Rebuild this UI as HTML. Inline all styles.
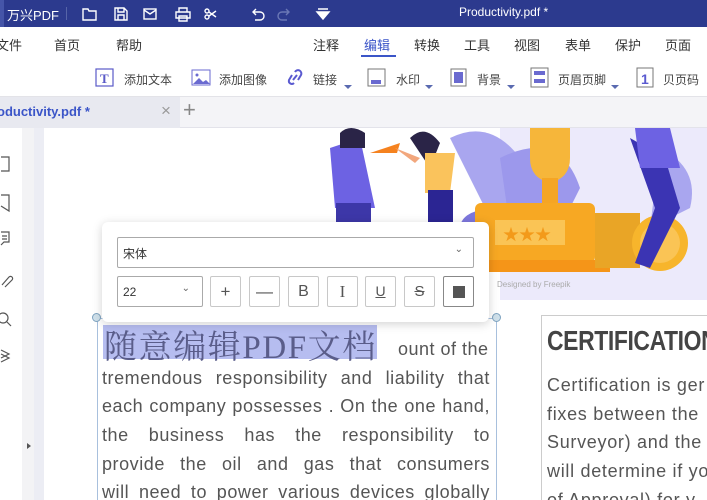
<!DOCTYPE html>
<html><head><meta charset="utf-8"><style>
*{margin:0;padding:0;box-sizing:border-box}
html,body{width:707px;height:500px;overflow:hidden}
body{background:#fff;font-family:"Liberation Sans","Noto Sans CJK SC",sans-serif;position:relative;color:#333}
.a{position:absolute}
.title{left:0;top:0;width:707px;height:27px;background:#2c3a8e;color:#fff}
.menu{top:27px;left:0;width:707px;height:33px;background:#fff;font-size:13px;color:#333}
.menu span{position:absolute;top:8px}
.tb{top:60px;left:0;width:707px;height:37px;background:#fff;border-bottom:1px solid #e3e3e8;font-size:12px;color:#444}
.tb span{position:absolute;top:11px}
.tabs{top:97px;left:0;width:707px;height:31px;background:#f4f4f7;border-bottom:1px solid #e3e3ea}
.btn{position:absolute;top:276px;width:31px;height:31px;border:1px solid #c8c8c8;border-radius:2px;background:#fff;font-size:17px;color:#555;text-align:center;line-height:29px}
.body p{position:absolute;left:102px;width:388px;font-size:18px;color:#555;white-space:nowrap;text-align:justify;text-align-last:justify;letter-spacing:0.55px}
</style></head><body>
<div class="a title">
 <div class="a" style="left:0;top:0;width:4px;height:27px;background:#4555a8"></div>
 <span class="a" style="left:7px;top:5px;font-size:13px">万兴PDF</span>
 <div class="a" style="left:66px;top:7px;width:1px;height:13px;background:#5664a8"></div>
 <svg class="a" style="left:78px;top:4px" width="260" height="20" fill="none" stroke="#fff" stroke-width="1.4">
  <path d="M5 5h5l1 2h7v9H5z"/>
  <path d="M37 4h9l3 3v9H37zM40 4v4h6V4M40 16v-5h6v5"/>
  <rect x="66" y="5" width="12" height="10"/><path d="M66 6l6 4 6-4"/>
  <path d="M98 8h14v6H98zM101 8V4h8v4M101 12h8v5h-8z"/>
  <circle cx="129" cy="7" r="2"/><circle cx="129" cy="13" r="2"/><path d="M131 8l7 5M131 12l7-5"/>
  <path d="M178 5l-3 3 3 3M175 8h7a4 4 0 010 8h-5"/>
  <path d="M208 5l3 3-3 3M211 8h-7a4 4 0 000 8h5" stroke="#6a77b5"/>
  <path d="M240 5h10M239 8h12l-6 7z" fill="#fff"/>
 </svg>
 <span class="a" style="left:459px;top:5px;font-size:12px">Productivity.pdf *</span>
</div>
<div class="a menu">
 <span style="left:-4px">文件</span><span style="left:54px">首页</span><span style="left:116px">帮助</span>
 <span style="left:313px">注释</span><span style="left:364px;color:#3b55c8">编辑</span>
 <div class="a" style="left:361px;top:28px;width:35px;height:2px;background:#3b55c8"></div>
 <span style="left:414px">转换</span><span style="left:464px">工具</span><span style="left:514px">视图</span><span style="left:565px">表单</span><span style="left:615px">保护</span><span style="left:665px">页面</span>
</div>
<div class="a tb">
 <svg class="a" style="left:95px;top:8px" width="20" height="20"><rect x="1" y="1" width="17" height="17" fill="none" stroke="#5a5ac8" stroke-width="1.2"/><text x="5" y="15" font-size="13" font-weight="bold" fill="#5a5ac8" font-family="Liberation Serif">T</text></svg>
 <span style="left:124px">添加文本</span>
 <svg class="a" style="left:191px;top:9px" width="20" height="18"><rect x="1" y="1" width="18" height="15" fill="none" stroke="#6a6ad0"/><path d="M2 15l6-6 4 4 3-2 4 4z" fill="#6a6ad0"/><circle cx="6" cy="6" r="1.5" fill="#6a6ad0"/></svg>
 <span style="left:219px">添加图像</span>
 <svg class="a" style="left:287px;top:8px" width="16" height="20" fill="none" stroke="#5a5ad0" stroke-width="2"><path d="M8 4a3 3 0 016 3l-3 5M7 15a3 3 0 01-5-3l3-5M6 12l4-5"/></svg>
 <span style="left:313px">链接</span>
 <svg class="a" style="left:367px;top:8px" width="20" height="20"><rect x="1" y="1" width="17" height="17" fill="none" stroke="#777"/><rect x="4" y="12" width="10" height="4" fill="#6a6ad0"/></svg>
 <span style="left:396px">水印</span>
 <svg class="a" style="left:450px;top:8px" width="20" height="20"><rect x="1" y="1" width="15" height="17" fill="none" stroke="#777"/><rect x="4" y="4" width="9" height="11" fill="#6a6ad0"/></svg>
 <span style="left:477px">背景</span>
 <svg class="a" style="left:530px;top:7px" width="20" height="22"><rect x="1" y="1" width="17" height="19" fill="none" stroke="#777"/><rect x="4" y="4" width="11" height="4" fill="#6a6ad0"/><rect x="4" y="12" width="11" height="4" fill="#6a6ad0"/></svg>
 <span style="left:558px">页眉页脚</span>
 <svg class="a" style="left:636px;top:7px" width="20" height="22"><rect x="1" y="1" width="16" height="19" fill="none" stroke="#777"/><text x="5" y="17" font-size="14" font-weight="bold" fill="#5a5ad0">1</text></svg>
 <span style="left:663px">贝页码</span>
 <div class="a" style="left:344px;top:25px;border:4px solid transparent;border-top:4px solid #5a6ab0"></div>
 <div class="a" style="left:425px;top:25px;border:4px solid transparent;border-top:4px solid #5a6ab0"></div>
 <div class="a" style="left:507px;top:25px;border:4px solid transparent;border-top:4px solid #5a6ab0"></div>
 <div class="a" style="left:611px;top:25px;border:4px solid transparent;border-top:4px solid #5a6ab0"></div>
</div>
<div class="a tabs">
 <div class="a" style="left:0;top:0;width:180px;height:31px;background:#e8e9f0"></div>
 <span class="a" style="left:-3px;top:7px;font-size:13px;font-weight:bold;color:#3b55c8">oductivity.pdf *</span>
 <span class="a" style="left:161px;top:4px;font-size:17px;color:#999">×</span>
 <span class="a" style="left:183px;top:0px;font-size:22px;color:#888">+</span>
</div>
<div class="a" style="left:22px;top:128px;width:12px;height:372px;background:#f3f3f5"></div>
<div class="a" style="left:34px;top:128px;width:10px;height:372px;background:#ecedf4"></div>
<svg class="a" style="left:0;top:150px" width="14" height="220" fill="none" stroke="#555" stroke-width="1.2">
 <path d="M1 7h8v14H1"/><path d="M1 45h8v16l-8-5"/><path d="M1 82h8v10H4l-3 3M2 86h5M2 89h5"/>
 <path d="M2 135l7-8a2 2 0 013 3l-7 7"/><circle cx="3" cy="168" r="5"/><path d="M7 172l4 4"/>
 <path d="M1 200l8 4-8 4M1 204l8 4-8 4"/>
</svg>
<div class="a" style="left:27px;top:443px;border:3px solid transparent;border-left:4px solid #555"></div>
<!-- illustration -->
<svg class="a" style="left:300px;top:128px" width="407" height="172">
 <rect x="170" y="0" width="237" height="172" fill="#eceafb"/>
 <rect x="0" y="0" width="200" height="172" fill="#fff"/>
 <path d="M150 10q40-20 70 20t10 80l-40-20z" fill="#a9a6ef"/>
 <path d="M200 30q60-30 80 30l-30 60-40-20z" fill="#9c98ec"/>
 <path d="M360 20q40 20 30 60l-40 20z" fill="#a9a6ef"/>
 <ellipse cx="185" cy="100" rx="25" ry="18" fill="#7d77dd"/>
 <path d="M230 0h40v30q0 20-20 25-20-5-20-25z" fill="#f6b63a"/>
 <rect x="242" y="50" width="16" height="40" fill="#f5a524"/>
 <rect x="175" y="75" width="120" height="60" rx="6" fill="#f7a823"/>
 <rect x="195" y="92" width="70" height="25" fill="#fac455"/>
 <text x="203" y="112" font-size="16" fill="#f39a1a">★★★</text>
 <rect x="170" y="132" width="140" height="12" fill="#f59518"/>
 <rect x="295" y="85" width="45" height="55" fill="#e9a526"/>
 <circle cx="360" cy="115" r="28" fill="#f7b52c"/><circle cx="360" cy="115" r="20" fill="#fac455"/>
 <path d="M330 10l35 20 15 50-30 60-15-5 20-55z" fill="#3b34b3"/>
 <path d="M335 0h35l10 40h-40z" fill="#6d62e3"/>
 <path d="M30 20l30-10 15 70H35z" fill="#6d62e3"/>
 <rect x="36" y="75" width="35" height="20" fill="#3d37a8"/>
 <path d="M40 5q10-10 25 0v15H40z" fill="#2a2447"/>
 <path d="M70 25l30-10-3 10z" fill="#f5821f"/>
 <path d="M95 20l25 10-5 5z" fill="#f2a77d"/>
 <path d="M110 10q15-15 30 5l-10 25z" fill="#2a2447"/>
 <path d="M125 25h30l-5 40h-25z" fill="#fac35c"/>
 <rect x="128" y="62" width="25" height="35" fill="#2b2593"/>
 <text x="197" y="159" font-size="8" fill="#aaa">Designed by Freepik</text>
</svg>
<!-- text body -->
<div class="body">
 <div class="a" style="left:97px;top:318px;width:400px;height:190px;border:1px solid #a8c0dd"></div>
 <div class="a" style="left:92px;top:313px;width:9px;height:9px;border-radius:50%;background:#cfe0ea;border:1px solid #7ea3c0"></div>
 <div class="a" style="left:492px;top:313px;width:9px;height:9px;border-radius:50%;background:#cfe0ea;border:1px solid #7ea3c0"></div>
 <div class="a" style="left:103px;top:325px;width:274px;height:34px;background:#b6bdf0"></div>
 <span class="a" style="left:104px;top:321px;font-family:'Liberation Serif','Noto Serif CJK SC',serif;font-size:33px;color:#5a5d8a;letter-spacing:1.6px">随意编辑PDF文档</span>
 <span class="a" style="left:398px;top:339px;font-size:18px;color:#555;letter-spacing:0.5px">ount of the</span>
 <p style="top:368px">tremendous responsibility and liability that</p>
 <p style="top:396px">each company possesses . On the one hand,</p>
 <p style="top:425px">the business has the responsibility to</p>
 <p style="top:454px">provide the oil and gas that consumers</p>
 <p style="top:482px">will need to power various devices globally</p>
</div>
<div class="a" style="left:541px;top:315px;width:180px;height:200px;border:1px solid #ccc"></div>
<span class="a" style="left:547px;top:325px;font-size:28px;font-weight:bold;color:#444;transform:scaleX(0.82);transform-origin:left;letter-spacing:-0.5px">CERTIFICATION</span>
<div class="a" style="left:547px;top:371px;font-size:18px;color:#555;line-height:28.7px;white-space:nowrap;letter-spacing:0.7px">Certification is ger<br>fixes between the<br>Surveyor) and the<br>will determine if yo<br>of Approval) for y</div>
<!-- popup -->
<div class="a" style="left:102px;top:222px;width:387px;height:100px;background:#fff;border-radius:6px;box-shadow:0 2px 10px rgba(0,0,0,0.18)"></div>
<div class="a" style="left:117px;top:237px;width:357px;height:31px;border:1px solid #aaa;border-radius:2px;font-size:12px;padding:7px 5px">宋体<span class="a" style="right:10px;top:6px;color:#666;font-size:10px">⌄</span></div>
<div class="a" style="left:117px;top:276px;width:86px;height:31px;border:1px solid #aaa;border-radius:2px;font-size:12px;padding:8px 5px">22<span class="a" style="right:12px;top:6px;color:#666;font-size:10px">⌄</span></div>
<div class="btn" style="left:210px">+</div>
<div class="btn" style="left:249px">—</div>
<div class="btn" style="left:288px;font-size:16px">B</div>
<div class="btn" style="left:327px;font-family:'Liberation Serif';font-size:17px">I</div>
<div class="btn" style="left:365px;text-decoration:underline;font-size:14px">U</div>
<div class="btn" style="left:404px;text-decoration:line-through;font-size:15px">S</div>
<div class="btn" style="left:443px;border-color:#888"><div style="width:12px;height:12px;background:#555;margin:9px auto"></div></div>
</body></html>
